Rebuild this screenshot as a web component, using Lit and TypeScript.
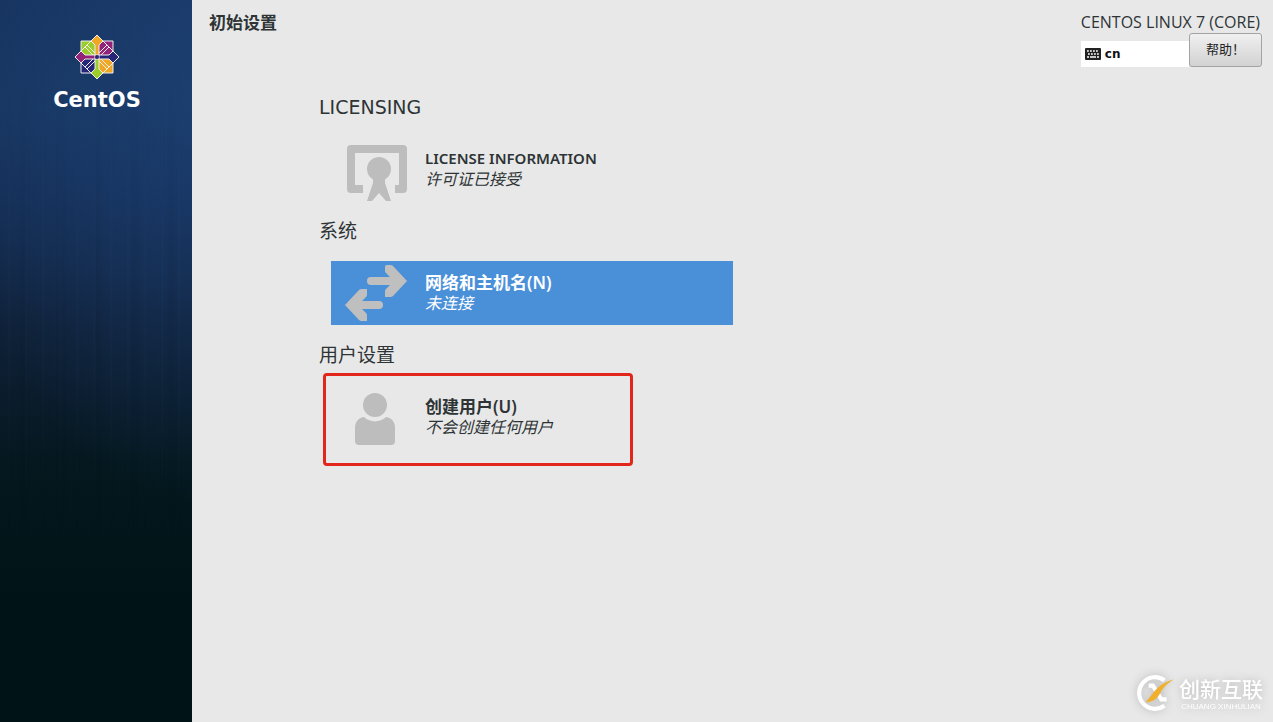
import { LitElement, html, svg, css } from "lit";
import { customElement, property } from "lit/decorators.js";
import { classMap } from "lit/directives/class-map.js";

const certificateIcon = svg`
  <path fill="#bdbdbd" d="M7 8h52a4 4 0 0 1 4 4v40a4 4 0 0 1-4 4h-8v-8h4V16H11v32h8v8H7a4 4 0 0 1-4-4V12a4 4 0 0 1 4-4z"/>
  <circle cx="35" cy="32" r="12" fill="#bdbdbd"/>
  <path fill="#bdbdbd" d="M29 40h12v6l6 18h-5l-7-8-7 8h-5l6-18z"/>`;

const arrowsIcon = svg`
  <path fill="#c0bfc0" d="M41 5.500Q41 4 43 4H46Q48 4 49 5L63 20 49 35Q48 36 46 36H41V30Q41 29 42 28L46 24H27a4 4 0 0 1 0-8H46L42 12Q41 11 41 10z"/>
  <path fill="#c0bfc0" d="M23 28H18Q16 28 15 29L1 44 15 59Q16 60 18 60H23V54Q23 53 22 52L18 48H35a4 4 0 0 0 0-8H18L22 36Q23 35 23 34z"/>`;

const userIcon = svg`
  <circle cx="31" cy="20" r="12" fill="#bdbdbd"/>
  <path fill="#bdbdbd" d="M20 32a16 16 0 0 0 22 0c6 1 9 5 9 11v13a4 4 0 0 1-4 4H15a4 4 0 0 1-4-4V43c0-6 3-10 9-11z"/>`;

@customElement("setup-spoke")
class SetupSpoke extends LitElement {
  @property() label = "";
  @property() status = "";
  @property({ attribute: false }) icon: unknown = null;
  @property({ type: Boolean }) selected = false;
  @property({ type: Boolean }) marked = false;
  @property({ type: Boolean }) latin = false;

  static styles = css`
    :host { display: block; position: relative; margin-left: 12px; }
    .spoke {
      display: flex; align-items: center; gap: 17px;
      width: 100%; height: 64px; padding: 0 13px; border: 0;
      background: transparent; color: #2e3436; text-align: left;
      font-family: "Noto Sans", "Noto Sans CJK SC", sans-serif;
      line-height: 21px;
    }
    .selected { background: #4a90d9; color: #fff; }
    .icon { width: 64px; height: 64px; flex: none; }
    .text { display: flex; flex-direction: column; }
    .label { font-size: 17px; font-weight: 600; }
    .latin { font-size: 15px; }
    .status { font-size: 16px; font-style: italic; }
    .mark {
      position: absolute; left: -8px; top: -12px;
      width: 310px; height: 93px; box-sizing: border-box;
      border: 3px solid #e3261b; border-radius: 4px; pointer-events: none;
    }
  `;

  render() {
    return html`
      <button class=${classMap({ spoke: true, selected: this.selected })} type="button">
        <svg class="icon" viewBox="0 0 64 64" aria-hidden="true">${this.icon}</svg>
        <span class="text">
          <span class=${classMap({ label: true, latin: this.latin })}>${this.label}</span>
          <span class="status">${this.status}</span>
        </span>
      </button>
      ${this.marked ? html`<span class="mark"></span>` : null}
    `;
  }
}

@customElement("brand-sidebar")
class BrandSidebar extends LitElement {
  static styles = css`
    :host {
      position: relative; display: flex; flex-direction: column; align-items: center;
      padding: 34px 0 0 2px; box-sizing: border-box;
      background:
        radial-gradient(ellipse 140% 58% at 110% 12%, #20488477, #20488440 50%, #20488400),
        linear-gradient(#17335d, #18365f 15%, #152f56 27%, #122745 38%, #0f2138 45%, #0a1b2a 56%, #05181f 64%, #021519 75%, #001317 85%);
    }
    .streaks {
      position: absolute; inset: 0;
      background:
        repeating-linear-gradient(90deg, #4a7fb000 0 7px, #4a7fb00a 9px, #4a7fb000 12px 17px),
        repeating-linear-gradient(90deg, #00081000 0 19px, #0008100e 23px, #00081000 29px 37px);
      -webkit-mask-image: linear-gradient(transparent 12%, #000 35%, #000 50%, transparent 75%);
      mask-image: linear-gradient(transparent 12%, #000 35%, #000 50%, transparent 75%);
    }
    .logo { width: 46px; height: 46px; }
    .name {
      margin-top: 8px; color: #fff;
      font: bold 21px/24px "DejaVu Sans", sans-serif;
    }
  `;

  render() {
    return html`
      <div class="streaks"></div>
      <svg class="logo" viewBox="-23 -23 46 46" role="img" aria-label="CentOS">
        <g stroke="#eeeef0" stroke-width="1">
          <path fill="#9ccd2a" d="M-16-16H0V0H-16z"/>
          <path fill="#932279" d="M0-16H16V0H0z"/>
          <path fill="#262577" d="M-16 0H0V16H-16z"/>
          <path fill="#efa724" d="M0 0H16V16H0z"/>
          <path fill="#efa724" d="M0-22L6-16 2-12V-2H-2V-12L-6-16z"/>
          <path fill="#262577" d="M22 0L16 6 12 2H2V-2H12L16-6z"/>
          <path fill="#9ccd2a" d="M0 22L-6 16-2 12V2H2V12L6 16z"/>
          <path fill="#932279" d="M-22 0L-16-6-12-2H-2V2H-12L-16 6z"/>
          <path fill="none" d="M0-22L22 0 0 22-22 0zM-10-12L-2-4M10-12L2-4M-10 12L-2 4M10 12L2 4M-12-10L-4-2M12-10L4-2M-12 10L-4 2M12 10L4 2"/>
        </g>
        <circle r="2" fill="#262577"/>
      </svg>
      <span class="name">CentOS</span>
    `;
  }
}

@customElement("app-root")
class AppRoot extends LitElement {
  static styles = css`
    :host {
      display: grid; grid-template-columns: 192px 1fr;
      min-height: 100vh; background: #e8e8e8; color: #2e3436;
      font-family: "Noto Sans", "Noto Sans CJK SC", sans-serif;
    }
    .header {
      display: flex; justify-content: space-between; align-items: flex-start;
      padding: 12px 11px 0 17px;
    }
    .title { margin: 0; font-size: 17px; line-height: 21px; font-weight: 600; }
    .product {
      padding-right: 2px;
      font-family: "Open Sans", sans-serif; font-size: 16px; line-height: 21px;
    }
    .tools { display: flex; align-items: flex-end; }
    .layout {
      display: flex; align-items: center; gap: 4px; flex: 1;
      height: 26px; padding: 0 4px; border: 0; background: #fff; color: #111;
      font: bold 12px/20px "DejaVu Sans", sans-serif;
    }
    .keyboard { width: 16px; height: 12px; }
    .help {
      width: 73px; height: 34px; padding: 0 0 2px;
      border: 1px solid #a3a3a3; border-radius: 3px;
      background: linear-gradient(#f0f0f0, #d2d2d2); color: #222;
      font: 13px/20px "Noto Sans CJK SC", sans-serif;
    }
    .hub {
      display: grid; grid-template-columns: 1fr 1fr;
      padding: 10px 127px 0;
    }
    .heading {
      margin: 0; font-size: 19px; line-height: 60px; font-weight: 400;
      font-family: "DejaVu Sans", "Noto Sans CJK SC", sans-serif;
    }
    .watermark {
      position: absolute; right: 10px; bottom: 10px;
      display: flex; align-items: center; gap: 5px; color: #fff;
      filter: drop-shadow(0 0 4px #b4b4b4);
    }
    .ring { width: 38px; height: 38px; }
    .words { display: flex; flex-direction: column; align-items: center; padding-top: 2px; }
    .cn { font: 500 21px/24px "Liberation Sans", "Noto Sans CJK SC", sans-serif; }
    .en { font: 8px/9px "Liberation Sans", sans-serif; }
  `;

  render() {
    return html`
      <brand-sidebar></brand-sidebar>
      <main>
        <header class="header">
          <h1 class="title">初始设置</h1>
          <div>
            <div class="product">CENTOS LINUX 7 (CORE)</div>
            <div class="tools">
              <button class="layout" type="button">
                <svg class="keyboard" viewBox="0 0 16 12" aria-hidden="true">
                  <rect width="16" height="12" rx="1" fill="#222"/>
                  <path stroke="#fff" stroke-width="1.5" stroke-dasharray="1.8 1.2" d="M2 3H14M3 6H14"/>
                  <path stroke="#fff" stroke-width="1.5" d="M2 9H4M5 9H11M12 9H14"/>
                </svg>
                cn
              </button>
              <button class="help" type="button">帮助！</button>
            </div>
          </div>
        </header>
        <div class="hub">
          <div>
            <h2 class="heading">LICENSING</h2>
            <setup-spoke latin label="LICENSE INFORMATION" status="许可证已接受" .icon=${certificateIcon}></setup-spoke>
            <h2 class="heading">系统</h2>
            <setup-spoke selected label="网络和主机名(N)" status="未连接" .icon=${arrowsIcon}></setup-spoke>
            <h2 class="heading">用户设置</h2>
            <setup-spoke marked label="创建用户(U)" status="不会创建任何用户" .icon=${userIcon}></setup-spoke>
          </div>
        </div>
      </main>
      <div class="watermark">
        <svg class="ring" viewBox="0 0 36 36" aria-hidden="true">
          <path fill="none" stroke="#fff" stroke-width="4" d="M27 6A15 15 0 1 0 27 30"/>
          <path fill="none" stroke="#fff" stroke-width="4" d="M12 11h4l8 13h5"/>
          <path fill="#f0b02d" d="M36 5C26 8 21 12 17 17L9 27C18 26 20 23 23 18 26 12 30 9 36 5z"/>
        </svg>
        <span class="words">
          <span class="cn">创新互联</span>
          <span class="en">CHUANG XINHULIAN</span>
        </span>
      </div>
    `;
  }
}
